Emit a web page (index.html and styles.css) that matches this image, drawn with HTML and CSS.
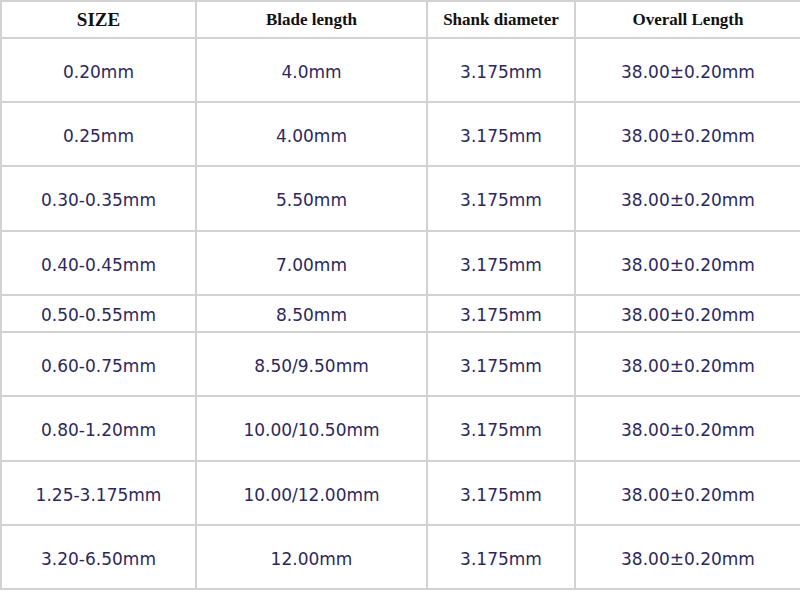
FILE: index.html
```html
<!DOCTYPE html>
<html>
<head>
<meta charset="utf-8">
<link rel="stylesheet" href="styles.css">
</head>
<body>
<table class="spec">
  <colgroup>
    <col class="c1"><col class="c2"><col class="c3"><col class="c4">
  </colgroup>
  <tr class="head">
    <th class="size">SIZE</th>
    <th>Blade length</th>
    <th>Shank diameter</th>
    <th>Overall Length</th>
  </tr>
  <tr class="r64"><td>0.20mm</td><td>4.0mm</td><td>3.175mm</td><td>38.00±0.20mm</td></tr>
  <tr class="r64"><td>0.25mm</td><td>4.00mm</td><td>3.175mm</td><td>38.00±0.20mm</td></tr>
  <tr class="r65"><td>0.30-0.35mm</td><td>5.50mm</td><td>3.175mm</td><td>38.00±0.20mm</td></tr>
  <tr class="r64"><td>0.40-0.45mm</td><td>7.00mm</td><td>3.175mm</td><td>38.00±0.20mm</td></tr>
  <tr class="r37"><td>0.50-0.55mm</td><td>8.50mm</td><td>3.175mm</td><td>38.00±0.20mm</td></tr>
  <tr class="r64"><td>0.60-0.75mm</td><td>8.50/9.50mm</td><td>3.175mm</td><td>38.00±0.20mm</td></tr>
  <tr class="r65"><td>0.80-1.20mm</td><td>10.00/10.50mm</td><td>3.175mm</td><td>38.00±0.20mm</td></tr>
  <tr class="r64"><td>1.25-3.175mm</td><td>10.00/12.00mm</td><td>3.175mm</td><td>38.00±0.20mm</td></tr>
  <tr class="r64"><td>3.20-6.50mm</td><td>12.00mm</td><td>3.175mm</td><td>38.00±0.20mm</td></tr>
</table>
</body>
</html>
```
FILE: styles.css
```css
html, body {
  margin: 0;
  padding: 0;
  background: #ffffff;
}
.spec {
  border-collapse: collapse;
  table-layout: fixed;
  width: 800px;
  margin: 0;
}
.c1 { width: 195px; }
.c2 { width: 231px; }
.c3 { width: 148px; }
.c4 { width: 226px; }
.spec th, .spec td {
  border: 2px solid #d2d2d2;
  padding: 0;
  text-align: center;
  vertical-align: middle;
}
.spec th {
  font-family: "Liberation Serif", "Times New Roman", serif;
  font-weight: bold;
  font-size: 17px;
  color: #111111;
}
.spec th.size {
  font-size: 19px;
}
.spec td {
  font-family: "DejaVu Sans", Verdana, sans-serif;
  font-size: 17px;
  color: #2c285e;
  padding-top: 3px;
}
.head { height: 37px; }
.r64 { height: 64px; }
.r65 { height: 65px; }
.r37 { height: 37px; }
```
